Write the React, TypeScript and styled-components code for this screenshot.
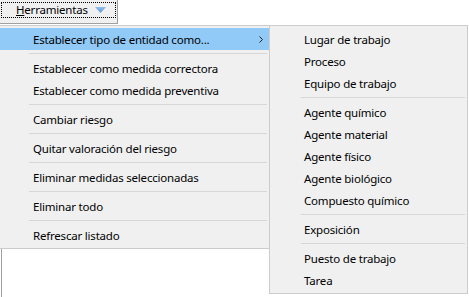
import React from "react";
import styled, { createGlobalStyle } from "styled-components";

const GlobalStyle = createGlobalStyle`
  html, body {
    margin: 0;
    padding: 0;
    background: #ffffff;
    overflow: hidden;
  }
  body {
    font-family: "Noto Sans", "Liberation Sans", sans-serif;
    font-size: 11.5px;
    letter-spacing: -0.2px;
    color: #000000;
  }
`;

const Screen = styled.div`
  position: relative;
  width: 469px;
  height: 297px;
  display: flex;
  flex-direction: column;
  overflow: hidden;
`;

const Toolbar = styled.div`
  display: flex;
  height: 25px;
`;

const ToolButton = styled.div`
  width: 115px;
  height: 21px;
  padding: 2px 1px 0 1px;
  background: #f0f0f0;
  border-right: 1px solid #a0a0a0;
  border-bottom: 1px solid #a0a0a0;
`;

const FocusBox = styled.div`
  height: 14px;
  border: 1px dotted #000000;
  display: flex;
  align-items: center;
  gap: 7px;
  padding-left: 14px;
`;

const ButtonLabel = styled.span`
  line-height: 14px;
  u {
    text-decoration: underline;
    text-underline-offset: 1px;
  }
`;

const ListPanel = styled.div`
  flex: 1;
  background: #ffffff;
  border-left: 1px solid #a0a0a0;
  margin-left: 1px;
`;

const Menu = styled.div<{ $top: number; $left: number; $width: number }>`
  position: absolute;
  top: ${(p) => p.$top}px;
  left: ${(p) => p.$left}px;
  width: ${(p) => p.$width}px;
  box-sizing: border-box;
  background: #f0f0f0;
  border: 1px solid #cccccc;
  padding: 2px 0;
  display: flex;
  flex-direction: column;
`;

const Item = styled.div<{ $active?: boolean; $indent: number }>`
  position: relative;
  height: 22px;
  display: flex;
  align-items: center;
  padding-left: ${(p) => p.$indent}px;
  background: ${(p) => (p.$active ? "#91c9f7" : "transparent")};
  white-space: nowrap;
`;

const Separator = styled.div<{ $indent: number }>`
  height: 7px;
  display: flex;
  align-items: center;
  padding-left: ${(p) => p.$indent}px;
  padding-right: 2px;
  &::after {
    content: "";
    flex: 1;
    height: 1px;
    background: #d7d7d7;
  }
`;

const Chevron = styled.svg`
  position: absolute;
  right: 6px;
  top: 8px;
`;

type Entry = { label?: string; sep?: boolean; sub?: boolean; active?: boolean };

const mainItems: Entry[] = [
  { label: "Establecer tipo de entidad como...", sub: true, active: true },
  { sep: true },
  { label: "Establecer como medida correctora" },
  { label: "Establecer como medida preventiva" },
  { sep: true },
  { label: "Cambiar riesgo" },
  { sep: true },
  { label: "Quitar valoración del riesgo" },
  { sep: true },
  { label: "Eliminar medidas seleccionadas" },
  { sep: true },
  { label: "Eliminar todo" },
  { sep: true },
  { label: "Refrescar listado" },
];

const subItems: Entry[] = [
  { label: "Lugar de trabajo" },
  { label: "Proceso" },
  { label: "Equipo de trabajo" },
  { sep: true },
  { label: "Agente químico" },
  { label: "Agente material" },
  { label: "Agente físico" },
  { label: "Agente biológico" },
  { label: "Compuesto químico" },
  { sep: true },
  { label: "Exposición" },
  { sep: true },
  { label: "Puesto de trabajo" },
  { label: "Tarea" },
];

function MenuList({ items, textIndent, sepIndent }: { items: Entry[]; textIndent: number; sepIndent: number }) {
  return (
    <>
      {items.map((it, i) =>
        it.sep ? (
          <Separator key={i} $indent={sepIndent} />
        ) : (
          <Item key={i} $active={it.active} $indent={textIndent}>
            {it.label}
            {it.sub && (
              <Chevron width="4" height="7" viewBox="0 0 4 7">
                <path d="M0.5 0.5 L3.5 3.5 L0.5 6.5" fill="none" stroke="#222" strokeWidth="1" />
              </Chevron>
            )}
          </Item>
        )
      )}
    </>
  );
}

export default function App() {
  return (
    <Screen>
      <GlobalStyle />
      <Toolbar>
        <ToolButton>
          <FocusBox>
            <ButtonLabel>
              <u>H</u>erramientas
            </ButtonLabel>
            <svg width="11" height="6" viewBox="0 0 11 6">
              <defs>
                <linearGradient id="tri" x1="0" y1="0" x2="0" y2="1">
                  <stop offset="0" stopColor="#8dbdea" />
                  <stop offset="1" stopColor="#5b98da" />
                </linearGradient>
              </defs>
              <path d="M0 0 H11 L5.5 6 Z" fill="url(#tri)" />
            </svg>
          </FocusBox>
        </ToolButton>
      </Toolbar>
      <ListPanel />
      <Menu $top={25} $left={-3} $width={273}>
        <MenuList items={mainItems} textIndent={35} sepIndent={31} />
      </Menu>
      <Menu $top={25} $left={269} $width={199}>
        <MenuList items={subItems} textIndent={34} sepIndent={31} />
      </Menu>
    </Screen>
  );
}
